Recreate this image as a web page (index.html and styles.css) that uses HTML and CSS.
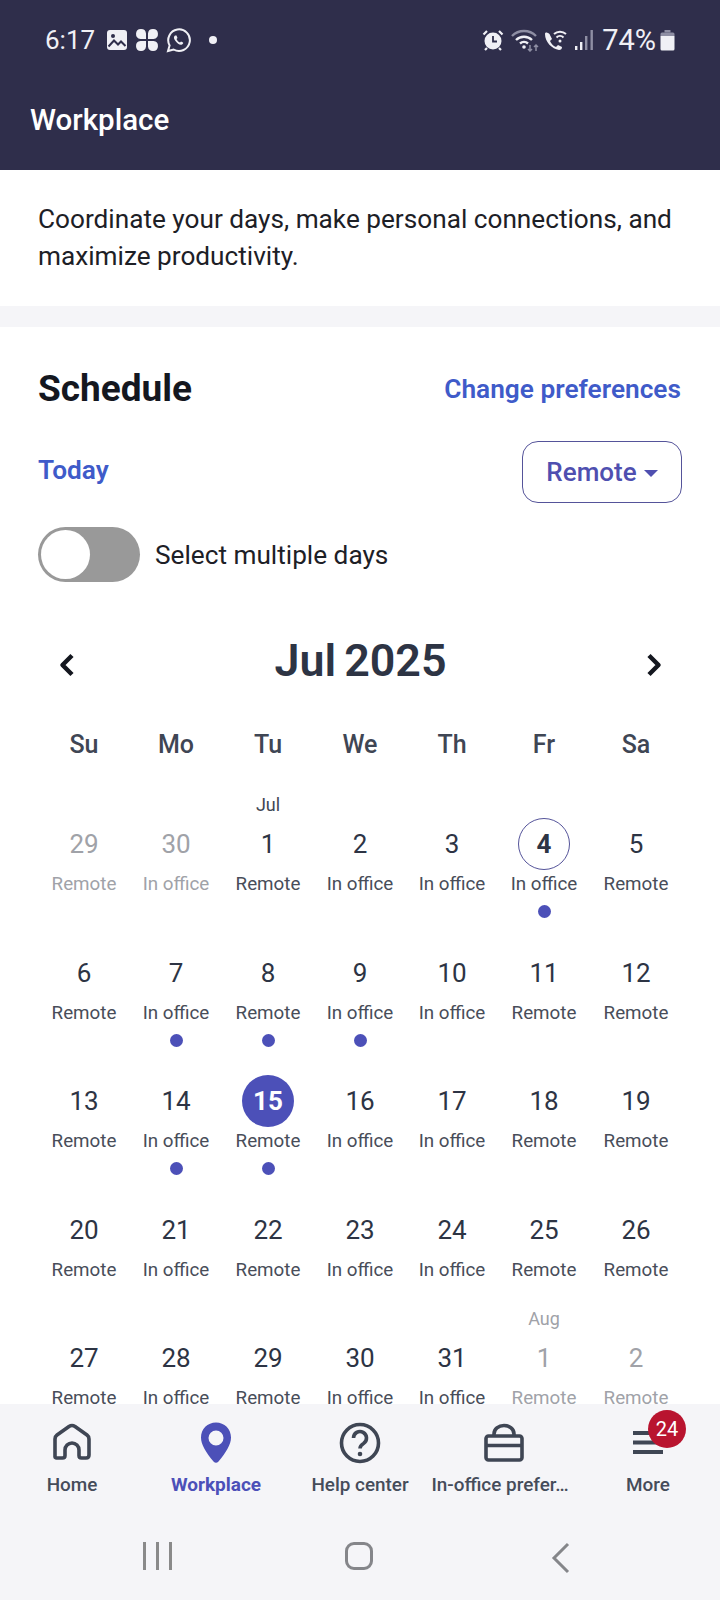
FILE: index.html
```html
<!DOCTYPE html>
<html lang="en">
<head>
    <meta charset="UTF-8">
    <meta name="viewport" content="width=device-width, initial-scale=1.0">
    <title>Workplace</title>
    <link rel="stylesheet" href="styles.css">
</head>
<body>
    <div class="app">
        <header class="header">
            <div class="status-bar">
                <span class="clock">6:17</span>
                <svg class="st-icon" width="22" height="22" viewBox="0 0 22 22"><rect x="1" y="1" width="20" height="20" rx="3" fill="#f0f0f5"/><circle cx="7" cy="7" r="2" fill="#2f2e4b"/><path d="M2.500 17.500l5.500-6 4 4 3-3 4.500 4.500" fill="none" stroke="#2f2e4b" stroke-width="2"/></svg>
                <svg class="st-icon" width="24" height="24" viewBox="0 0 24 24" fill="#f0f0f5"><path d="M11 11H5.500A5 5 0 1 1 11 5.500ZM13 11V5.500A5 5 0 1 1 18.500 11ZM13 13h5.500A5 5 0 1 1 13 18.500ZM11 13v5.500A5 5 0 1 1 5.500 13Z"/></svg>
                <svg class="st-icon" width="25" height="25" viewBox="0 0 25 25" fill="none" stroke="#f0f0f5"><path d="M2 23l1.600-5.600A10.800 10.800 0 1 1 7.600 21.500Z" stroke-width="2"/><path d="M9 7.500c-1.500 1-1.500 3 .5 5.500s4.500 4.500 6.500 3.500c1-.5 1.500-1.500 1-2l-2-1-1 1c-1.500-.5-3-2-3.500-3.500l1-1-1-2.500Z" fill="#f0f0f5" stroke="none"/></svg>
                <span class="st-dot"></span>
                <div class="status-right">
                    <svg class="st-icon" width="22" height="22" viewBox="0 0 22 22"><circle cx="11" cy="12" r="8.500" fill="#f0f0f5"/><path d="M11 7v5.500h4" fill="none" stroke="#2f2e4b" stroke-width="1.800"/><path d="M1.500 5.500L5 2M20.500 5.500L17 2M5 19l-2 2M17 19l2 2" stroke="#f0f0f5" stroke-width="2.200"/></svg>
                    <svg class="st-wifi" width="30" height="24" viewBox="0 0 30 24" fill="none"><path d="M1 8a17 17 0 0 1 24 0" stroke="#8e8ea3" stroke-width="2.400"/><path d="M5 12a11.500 11.500 0 0 1 16 0" stroke="#f0f0f5" stroke-width="2.400"/><path d="M9 15.500a6 6 0 0 1 8 0" stroke="#f0f0f5" stroke-width="2.400"/><circle cx="13" cy="19" r="1.800" fill="#f0f0f5"/><path d="M19 17v6M17 21l2 2 2-2" stroke="#8e8ea3" stroke-width="1.500"/><path d="M25 23v-6M23 19l2-2 2 2" stroke="#8e8ea3" stroke-width="1.500"/></svg>
                    <svg class="st-icon" width="23" height="22" viewBox="0 0 23 22"><path d="M1 5c0 8 7 15 14 16 2 0 3-1 3-3l-4-2-2 2c-3-1-5-4-6-6l2-2L5.500 5C3 3 1 3 1 5Z" fill="#f0f0f5"/><path d="M10 5a9 9 0 0 1 12 0M12.500 8.500a5 5 0 0 1 7 0" fill="none" stroke="#f0f0f5" stroke-width="2"/><circle cx="16" cy="12" r="1.500" fill="#f0f0f5"/></svg>
                    <svg class="st-signal" width="20" height="22" viewBox="0 0 20 22"><rect x="1" y="17" width="2.400" height="4" fill="#f0f0f5"/><rect x="6" y="13" width="2.400" height="8" fill="#f0f0f5"/><rect x="11" y="7" width="2.400" height="14" fill="#8e8ea3"/><rect x="16.500" y="1" width="2.400" height="20" fill="#8e8ea3"/></svg>
                    <span class="battery-text">74%</span>
                    <svg class="st-battery" width="15" height="22" viewBox="0 0 15 22"><path d="M4.500 1h6v2.500h-6Z" fill="#8e8ea3"/><path d="M2 3.500h11a1.500 1.500 0 0 1 1.500 1.500v2H.5V5A1.500 1.500 0 0 1 2 3.500Z" fill="#8e8ea3"/><path d="M.5 7h14v13a1.500 1.500 0 0 1-1.500 1.500H2A1.500 1.500 0 0 1 .5 20Z" fill="#f0f0f5"/></svg>
                </div>
            </div>
            <h1 class="title">Workplace</h1>
        </header>

        <main class="content">
            <section class="intro">Coordinate your days, make personal connections, and maximize productivity.</section>

            <section class="schedule">
                <div class="schedule-head">
                    <h2>Schedule</h2>
                    <span class="link">Change preferences</span>
                </div>
                <div class="today-row">
                    <span class="link">Today</span>
                    <div class="dropdown">Remote<span class="caret"></span></div>
                </div>
                <div class="toggle-row">
                    <div class="toggle"><span class="knob"></span></div>
                    <span>Select multiple days</span>
                </div>
                <div class="month-row">
                    <svg class="chevron" width="18" height="26" viewBox="0 0 18 26" fill="none" stroke="#14171f" stroke-width="4.500" stroke-linejoin="round"><path d="M14 3.500L4.500 13l9.500 9.500"/></svg>
                    <span class="month">Jul 2025</span>
                    <svg class="chevron" width="18" height="26" viewBox="0 0 18 26" fill="none" stroke="#14171f" stroke-width="4.500" stroke-linejoin="round"><path d="M4 3.500L13.500 13 4 22.500"/></svg>
                </div>
                <div class="weekdays">
                    <span>Su</span><span>Mo</span><span>Tu</span><span>We</span><span>Th</span><span>Fr</span><span>Sa</span>
                </div>
                <div class="calendar" id="calendar"></div>
            </section>
        </main>

        <nav class="tabs">
            <div class="tab">
                <svg width="40" height="40" viewBox="0 0 40 40" fill="none" stroke="#3f4654" stroke-width="3.600" stroke-linejoin="round"><path d="M3 34V16q0-2.500 2-4L17 3.500q3-2 6 0L35 12q2 1.500 2 4v16q0 3-3 3h-4.500q-2.500 0-2.500-2.500V27a7 7 0 0 0-14 0v5.500q0 2.500-2.500 2.500H6q-3 0-3-1Z"/></svg>
                <span>Home</span>
            </div>
            <div class="tab tab-active">
                <svg width="40" height="42" viewBox="0 0 40 42"><path fill-rule="evenodd" d="M20 0.500C11.500 0.500 5 7 5 15.500c0 7 5 15 12.500 24q2.500 2.500 5 0C30 30.500 35 22.500 35 15.500 35 7 28.500 0.500 20 0.500Zm0 8a7.500 7.500 0 1 1 0 15 7.500 7.500 0 0 1 0-15Z" fill="#4c50b8"/></svg>
                <span>Workplace</span>
            </div>
            <div class="tab">
                <svg width="42" height="42" viewBox="0 0 42 42" fill="none" stroke="#3f4654" stroke-width="3.600"><circle cx="21" cy="21" r="18.500"/><path d="M14.500 16a6.500 6.500 0 1 1 10 5.500c-2.500 1.500-3.500 2.500-3.500 5"/><circle cx="21" cy="32" r="2.300" fill="#3f4654" stroke="none"/></svg>
                <span>Help center</span>
            </div>
            <div class="tab">
                <svg width="40" height="40" viewBox="0 0 40 40" fill="none" stroke="#3f4654" stroke-width="3.600" stroke-linejoin="round"><rect x="2" y="13" width="36" height="24" rx="2.500"/><path d="M2 22.500h36"/><path d="M10 13v-2a10 8.500 0 0 1 20 0v2"/></svg>
                <span class="tab-long">In-office prefer…</span>
            </div>
            <div class="tab">
                <svg width="40" height="40" viewBox="0 0 40 40" stroke="#3f4654" stroke-width="3.800"><path d="M5 10h30M5 19.500h30M5 29h30"/></svg>
                <span>More</span>
                <span class="badge">24</span>
            </div>
        </nav>

        <div class="android-nav">
            <div class="nav-slot"><span class="recents"><i></i><i></i><i></i></span></div>
            <div class="nav-slot"><span class="home-btn"></span></div>
            <div class="nav-slot">
                <svg width="20" height="32" viewBox="0 0 20 32" fill="none" stroke="#85868a" stroke-width="3"><path d="M17 2L3 16l14 14"/></svg>
            </div>
        </div>
    </div>

    <script>
        // label for each day, in order, from Sun 29 Jun
        const days = [
            [29, 'Remote', 'out'], [30, 'In office', 'out'], [1, 'Remote', '', 'Jul'], [2, 'In office'], [3, 'In office'], [4, 'In office', 'ring dot'], [5, 'Remote'],
            [6, 'Remote'], [7, 'In office', 'dot'], [8, 'Remote', 'dot'], [9, 'In office', 'dot'], [10, 'In office'], [11, 'Remote'], [12, 'Remote'],
            [13, 'Remote'], [14, 'In office', 'dot'], [15, 'Remote', 'now dot'], [16, 'In office'], [17, 'In office'], [18, 'Remote'], [19, 'Remote'],
            [20, 'Remote'], [21, 'In office'], [22, 'Remote'], [23, 'In office'], [24, 'In office'], [25, 'Remote'], [26, 'Remote'],
            [27, 'Remote'], [28, 'In office'], [29, 'Remote'], [30, 'In office'], [31, 'In office'], [1, 'Remote', 'out', 'Aug'], [2, 'Remote', 'out']
        ];

        document.getElementById('calendar').innerHTML = days.map(d => {
            const flags = d[2] || '';
            return `<div class="day ${flags}">
                <span class="day-month">${d[3] || ''}</span>
                <span class="day-num">${d[0]}</span>
                <span class="day-label">${d[1]}</span>
                <span class="day-dot"></span>
            </div>`;
        }).join('');
    </script>
</body>
</html>
```
FILE: styles.css
```css
body, html {
    margin: 0;
    padding: 0;
    height: 100%;
    font-family: Roboto, "Liberation Sans", sans-serif;
    overflow: hidden;
}
.app {
    display: flex;
    flex-direction: column;
    height: 1600px;
    width: 720px;
    background-color: #f5f5f8;
    color: #14171f;
}
.header {
    flex: none;
    height: 170px;
    box-sizing: border-box;
    background-color: #2f2e4b;
    color: #fff;
    padding-top: 24px;
}
.status-bar {
    display: flex;
    align-items: center;
    height: 32px;
    padding: 0 45px 0 45px;
    color: #f0f0f5;
}
.clock {
    font-size: 26px;
    margin-right: 11px;
}
.st-icon {
    margin-right: 7px;
}
.st-dot {
    width: 8px;
    height: 8px;
    border-radius: 50%;
    background-color: #f0f0f5;
    margin-left: 11px;
}
.status-right {
    display: flex;
    align-items: center;
    margin-left: auto;
}
.st-wifi {
    margin-right: 3px;
}
.st-signal {
    margin-right: 8px;
}
.battery-text {
    font-size: 29px;
    margin-right: 4px;
}
.title {
    margin: 46px 0 0 30px;
    font-size: 29.500px;
    font-weight: 500;
    line-height: 36px;
}
.content {
    flex: 1;
    min-height: 0;
    overflow: hidden;
}
.intro {
    background-color: #fff;
    height: 136px;
    box-sizing: border-box;
    padding: 31px 38px 0;
    font-size: 26.200px;
    line-height: 37px;
    color: #1d2026;
}
.schedule {
    margin-top: 21px;
    background-color: #fff;
    padding: 38px 38px 0;
}
.schedule-head, .today-row {
    display: flex;
    align-items: center;
    justify-content: space-between;
}
.schedule-head h2 {
    margin: 0;
    font-size: 37px;
    font-weight: 700;
    line-height: 48px;
    color: #14171f;
}
.link {
    color: #3f5bc9;
    font-size: 26.250px;
    font-weight: 600;
}
.schedule-head .link {
    margin-right: 1px;
}
.today-row {
    margin-top: 28px;
}
.today-row .link {
    margin-bottom: 4px;
}
.dropdown {
    display: flex;
    align-items: center;
    justify-content: center;
    width: 160px;
    height: 62px;
    box-sizing: border-box;
    border: 1.500px solid #55549a;
    border-radius: 16px;
    color: #4f4fb0;
    font-size: 26px;
    font-weight: 500;
}
.caret {
    margin-left: 7px;
    margin-top: 3px;
    border-left: 7px solid transparent;
    border-right: 7px solid transparent;
    border-top: 7px solid #4f4fb0;
}
.toggle-row {
    display: flex;
    align-items: center;
    gap: 15px;
    margin-top: 24px;
    font-size: 26.200px;
    color: #1d2026;
}
.toggle {
    display: flex;
    align-items: center;
    width: 102px;
    height: 55px;
    box-sizing: border-box;
    padding-left: 3px;
    border-radius: 28px;
    background-color: #999;
}
.knob {
    width: 49px;
    height: 49px;
    border-radius: 50%;
    background-color: #fff;
}
.month-row {
    display: flex;
    align-items: center;
    justify-content: space-between;
    margin-top: 50px;
    padding: 0 19px 0 20px;
    height: 60px;
}
.chevron {
    margin-top: 6px;
}
.month {
    margin-bottom: 4px;
    font-size: 44.800px;
    font-weight: 600;
    color: #2d3444;
    word-spacing: -3px;
}
.weekdays {
    display: grid;
    grid-template-columns: repeat(7, 92px);
    margin-top: 38px;
    text-align: center;
    font-size: 25px;
    font-weight: 500;
    line-height: 30px;
    color: #3f4654;
}
.calendar {
    display: grid;
    grid-template-columns: repeat(7, 92px);
    grid-auto-rows: 128.500px;
    margin-top: 32px;
}
.day {
    display: flex;
    flex-direction: column;
    align-items: center;
    color: #2d3444;
}
.day-month {
    height: 26px;
    line-height: 26px;
    font-size: 18px;
    color: #3f4654;
}
.day-num {
    display: flex;
    align-items: center;
    justify-content: center;
    width: 52px;
    height: 52px;
    box-sizing: border-box;
    border-radius: 50%;
    font-size: 26px;
}
.day-label {
    height: 26px;
    margin-top: 1px;
    line-height: 26px;
    font-size: 18.800px;
    color: #484d59;
}
.day-dot {
    display: none;
    width: 13px;
    height: 13px;
    margin-top: 8px;
    border-radius: 50%;
    background-color: #4c50b8;
}
.dot .day-dot {
    display: block;
}
.ring .day-num {
    border: 1.500px solid #55549a;
    font-weight: 700;
}
.now .day-num {
    background-color: #4c50b8;
    color: #fff;
    font-weight: 700;
}
.out .day-num, .out .day-label, .out .day-month {
    color: #a0a2a8;
}
.tabs {
    flex: none;
    display: grid;
    grid-template-columns: repeat(5, 144px);
    height: 116px;
    box-sizing: border-box;
    padding-top: 18px;
}
.tab {
    position: relative;
    display: flex;
    flex-direction: column;
    align-items: center;
    color: #454c5a;
    font-size: 18.900px;
    font-weight: 500;
}
.tab svg {
    height: 42px;
}
.tab span {
    margin-top: 9px;
    white-space: nowrap;
}
.tab .tab-long {
    margin-right: 8px;
}
.tab-active {
    color: #4c50b8;
    font-size: 19px;
    font-weight: 700;
}
.tab .badge {
    position: absolute;
    top: -12px;
    left: 72px;
    display: flex;
    align-items: center;
    justify-content: center;
    margin: 0;
    width: 38px;
    height: 38px;
    border-radius: 50%;
    background-color: #b9142f;
    color: #fff;
    font-size: 20px;
    font-weight: 400;
}
.android-nav {
    flex: none;
    display: grid;
    grid-template-columns: repeat(3, 202px);
    height: 80px;
    padding: 0 56px;
    align-items: start;
}
.nav-slot {
    display: flex;
    justify-content: center;
    padding-top: 22px;
}
.recents {
    display: flex;
    gap: 10px;
}
.recents i {
    width: 3px;
    height: 28px;
    background-color: #8a8a8a;
}
.home-btn {
    width: 28px;
    height: 28px;
    box-sizing: border-box;
    border: 3px solid #85868a;
    border-radius: 9px;
}
```
